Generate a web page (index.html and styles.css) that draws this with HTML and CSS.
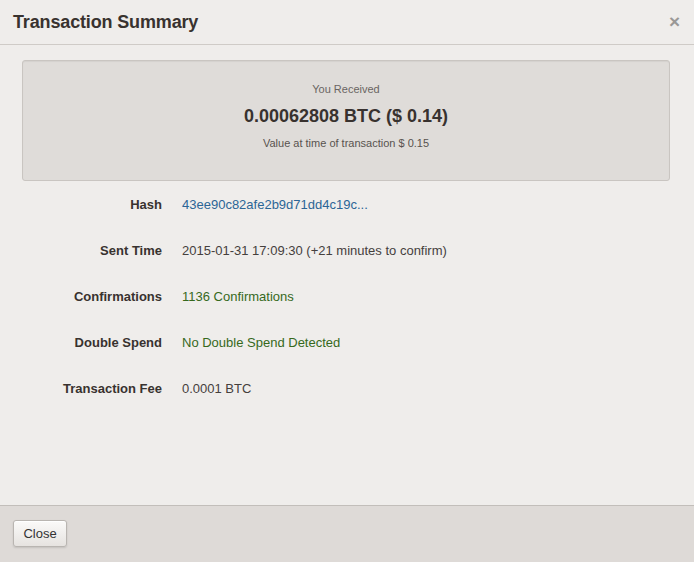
FILE: index.html
```html
<!DOCTYPE html>
<html>
<head>
<meta charset="utf-8">
<link rel="stylesheet" href="styles.css">
</head>
<body>
<div class="modal">
  <div class="modal-header">
    <h3 class="title">Transaction Summary</h3>
    <span class="close-x">×</span>
  </div>
  <div class="modal-body">
    <div class="well">
      <p class="received">You Received</p>
      <p class="amount">0.00062808 BTC ($ 0.14)</p>
      <p class="value">Value at time of transaction $ 0.15</p>
    </div>
    <div class="details">
      <div class="label">Hash</div>
      <div class="val"><a class="link" href="#">43ee90c82afe2b9d71dd4c19c...</a></div>
      <div class="label">Sent Time</div>
      <div class="val">2015-01-31 17:09:30 (+21 minutes to confirm)</div>
      <div class="label">Confirmations</div>
      <div class="val ok">1136 Confirmations</div>
      <div class="label">Double Spend</div>
      <div class="val ok">No Double Spend Detected</div>
      <div class="label">Transaction Fee</div>
      <div class="val">0.0001 BTC</div>
    </div>
  </div>
  <div class="modal-footer">
    <button class="btn">Close</button>
  </div>
</div>
</body>
</html>
```
FILE: styles.css
```css
html, body {
  margin: 0;
  padding: 0;
  height: 100%;
}
body {
  font-family: "Liberation Sans", Arial, sans-serif;
  color: #333;
  background: #efedeb;
}
.modal {
  display: flex;
  flex-direction: column;
  height: 562px;
  width: 694px;
}
.modal-header {
  height: 45px;
  box-sizing: border-box;
  display: flex;
  align-items: center;
  justify-content: space-between;
  padding: 0 14px 0 13px;
  border-bottom: 1px solid #cfcbc7;
}
.title {
  margin: 0;
  font-size: 18px;
  font-weight: bold;
  color: #38322f;
  padding-top: 1px;
  letter-spacing: -0.15px;
}
.close-x {
  font-size: 19px;
  font-weight: bold;
  color: #9a9896;
  line-height: 1;
  margin-top: -2px;
}
.modal-body {
  flex: 1;
  padding: 15px 24px 0 22px;
}
.well {
  background: #dfdcd9;
  border: 1px solid #c9c5c1;
  border-radius: 3px;
  box-shadow: inset 0 1px 1px rgba(0,0,0,0.05);
  padding: 20px 10px 29px;
  text-align: center;
}
.well p {
  margin: 0;
}
.received {
  font-size: 11px;
  line-height: 16px;
  color: #6a6562;
}
.amount {
  font-size: 18px;
  font-weight: bold;
  line-height: 22px;
  margin-top: 8px !important;
  color: #38322f;
}
.value {
  font-size: 11px;
  line-height: 16px;
  margin-top: 8px !important;
  color: #58534f;
}
.details {
  display: grid;
  grid-template-columns: 140px 1fr;
  column-gap: 20px;
  grid-auto-rows: 46px;
  font-size: 13px;
}
.label {
  text-align: right;
  font-weight: bold;
  align-self: center;
  color: #38322f;
}
.val {
  align-self: center;
  color: #45403d;
}
.link {
  color: #2b6596;
  text-decoration: none;
}
.ok {
  color: #36691c;
}
.modal-footer {
  height: 57px;
  box-sizing: border-box;
  border-top: 1px solid #c2beba;
  background: #dedad7;
  padding: 14px 13px;
}
.btn {
  font-family: "Liberation Sans", Arial, sans-serif;
  font-size: 13px;
  color: #333;
  width: 54px;
  height: 27px;
  padding: 0;
  border: 1px solid #b9b5b1;
  border-radius: 3px;
  background: linear-gradient(#fbfaf9, #e6e3e0);
  box-shadow: 0 1px 2px rgba(0,0,0,0.12), inset 0 1px 0 #fff;
}
```
